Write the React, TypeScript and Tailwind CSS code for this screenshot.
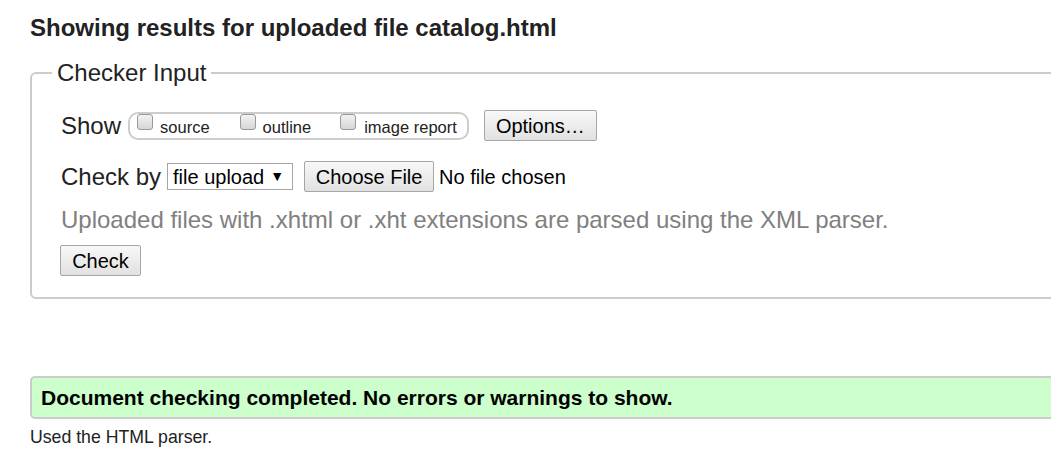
export default function App() {
  return (
    <div className="w-full overflow-hidden bg-white text-[#222] font-['Liberation_Sans',Arial,sans-serif]">
      <div className="w-[1120px] pl-[30px]">
        <h1 className="pt-[14px] text-[24px] leading-[28px] font-bold">
          Showing results for uploaded file catalog.html
        </h1>

        <fieldset className="mt-[17px] border-2 border-[#ccc] rounded-[6px] pl-[29px] pb-[21px]">
          <legend className="ml-[-9px] px-[5px] text-[24px] leading-[28px]">Checker Input</legend>

          {/* show options */}
          <div className="mt-[23px] flex items-center h-[31px]">
            <span className="text-[24px] leading-[28px]">Show</span>
            <div className="ml-[7px] flex items-start h-[28px] border-2 border-[#ccc] rounded-[10px] pl-[7px] pr-[10px]">
              <span className="w-[16px] h-[16px] rounded-[3px] border border-[#9a9a9a] bg-gradient-to-b from-[#f2f2f2] to-[#d6d6d6]" />
              <span className="ml-[7px] mt-[3px] text-[16.5px] leading-[20px]">source</span>
              <span className="ml-[30px] w-[16px] h-[16px] rounded-[3px] border border-[#9a9a9a] bg-gradient-to-b from-[#f2f2f2] to-[#d6d6d6]" />
              <span className="ml-[7px] mt-[3px] text-[16.5px] leading-[20px]">outline</span>
              <span className="ml-[29px] w-[16px] h-[16px] rounded-[3px] border border-[#9a9a9a] bg-gradient-to-b from-[#f2f2f2] to-[#d6d6d6]" />
              <span className="ml-[8px] mt-[3px] text-[16.5px] leading-[20px]">image report</span>
            </div>
            <button className="ml-[15px] h-[31px] w-[113px] border border-[#a6a6a6] rounded-[2px] bg-gradient-to-b from-[#f8f8f8] to-[#e1e1e1] text-[20px] text-black">
              Options…
            </button>
          </div>

          {/* check by */}
          <div className="mt-[20px] flex items-center h-[31px]">
            <span className="text-[24px] leading-[28px]">Check by</span>
            <div className="ml-[6px] flex items-center h-[27px] w-[126px] border border-[#a6a6a6] bg-white pl-[5px] pr-[8px]">
              <span className="text-[20px] leading-[24px] text-black">file upload</span>
              <span className="ml-auto text-[14px] text-black">▼</span>
            </div>
            <button className="ml-[11px] h-[31px] w-[130px] border border-[#a6a6a6] rounded-[2px] bg-gradient-to-b from-[#f8f8f8] to-[#e1e1e1] text-[20px] text-black">
              Choose File
            </button>
            <span className="ml-[5px] text-[20px] leading-[24px] text-black">No file chosen</span>
          </div>

          <p className="mt-[14px] text-[24px] leading-[28px] text-[#808080]">
            Uploaded files with .xhtml or .xht extensions are parsed using the XML parser.
          </p>

          <button className="mt-[11px] h-[31px] w-[81px] -ml-px border border-[#a6a6a6] rounded-[2px] bg-gradient-to-b from-[#f8f8f8] to-[#e1e1e1] text-[20px] text-black">
            Check
          </button>
        </fieldset>

        <div className="mt-[77px] h-[43px] flex items-center border-2 border-[#ccc] rounded-[5px] bg-[#ccffcc] pl-[9px]">
          <span className="text-[21px] leading-[24px] font-bold text-black">
            Document checking completed. No errors or warnings to show.
          </span>
        </div>

        <p className="mt-[8px] text-[17.7px] leading-[20px]">Used the HTML parser.</p>
      </div>
    </div>
  );
}
